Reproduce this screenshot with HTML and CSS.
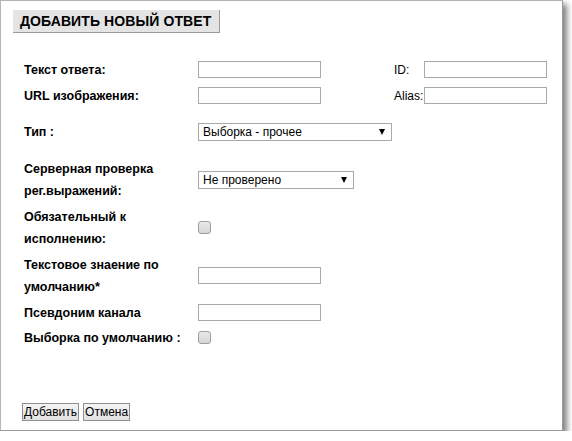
FILE: index.html
```html
<!DOCTYPE html>
<html lang="ru">
<head>
<meta charset="utf-8">
<title>Добавить новый ответ</title>
<link rel="stylesheet" href="styles.css">
</head>
<body>
<div class="panel">
  <div class="title">ДОБАВИТЬ НОВЫЙ ОТВЕТ</div>
  <form class="form">
    <div class="row r1">
      <label class="lbl">Текст ответа:</label>
      <div class="field"><input class="txt" type="text"></div>
      <span class="lbl2">ID:</span>
      <div class="field"><input class="txt" type="text"></div>
    </div>
    <div class="row">
      <label class="lbl">URL изображения:</label>
      <div class="field"><input class="txt" type="text"></div>
      <span class="lbl2">Alias:</span>
      <div class="field"><input class="txt" type="text"></div>
    </div>
    <div class="row r3">
      <label class="lbl">Тип :</label>
      <div class="field"><div class="sel wide">Выборка - прочее</div></div>
    </div>
    <div class="row r4">
      <label class="lbl">Серверная проверка<br>рег.выражений:</label>
      <div class="field"><div class="sel mid">Не проверено</div></div>
    </div>
    <div class="row">
      <label class="lbl">Обязательный к<br>исполнению:</label>
      <div class="field"><span class="chk"></span></div>
    </div>
    <div class="row">
      <label class="lbl">Текстовое знаение по<br>умолчанию*</label>
      <div class="field"><input class="txt" type="text"></div>
    </div>
    <div class="row">
      <label class="lbl">Псевдоним канала</label>
      <div class="field"><input class="txt up" type="text"></div>
    </div>
    <div class="row r8">
      <label class="lbl">Выборка по умолчанию :</label>
      <div class="field"><span class="chk"></span></div>
    </div>
  </form>
  <div class="actions">
    <button class="btn" type="button">Добавить</button>
    <button class="btn" type="button">Отмена</button>
  </div>
</div>
</body>
</html>
```

FILE: styles.css
```css
html, body {
  margin: 0;
  padding: 0;
  background: #fff;
}
body {
  font-family: "Liberation Sans", Arial, sans-serif;
  font-size: 12px;
  color: #000;
}
.panel {
  box-sizing: border-box;
  width: 563px;
  height: 431px;
  border: 1px solid #b4b4b4;
  border-right-color: #9a9a9a;
  border-bottom-color: #9a9a9a;
  background: #fff;
  box-shadow: 4px 4px 6px rgba(0, 0, 0, 0.5);
  display: flex;
  flex-direction: column;
  padding: 9px 0 9px 12px;
}
.title {
  align-self: flex-start;
  box-sizing: border-box;
  width: 207px;
  height: 23px;
  background: #e4e4e4;
  border-right: 1px solid #9c9c9c;
  border-bottom: 1px solid #9c9c9c;
  font-weight: bold;
  font-size: 14px;
  line-height: 22px;
  padding-left: 7px;
  letter-spacing: 0.1px;
}
.form {
  margin: 26px 0 0 11px;
  display: flex;
  flex-direction: column;
  gap: 4px;
}
.row {
  display: grid;
  grid-template-columns: 174px 196px 30px 124px;
  align-items: center;
}
.r3 { margin-top: 10px; }
.r4 { margin-top: 11px; }
.r8 { margin-top: -1px; }
.lbl {
  font-weight: bold;
  font-size: 12.5px;
  line-height: 22px;
  white-space: nowrap;
}
.lbl2 {
  line-height: 22px;
}
.field {
  display: flex;
  align-items: center;
}
.txt {
  box-sizing: border-box;
  width: 123px;
  height: 17px;
  margin: 0;
  padding: 0 2px;
  border: 1px solid #a9a9a9;
  background: #fff;
  font: inherit;
  position: relative;
  top: -1px;
}
.sel {
  box-sizing: border-box;
  position: relative;
  height: 18px;
  border: 1px solid #a9a9a9;
  background: #fff;
  padding-left: 4px;
  line-height: 16px;
  font-size: 12px;
  color: #000;
}
.sel::after {
  content: "";
  position: absolute;
  right: 6px;
  top: 5px;
  width: 0;
  height: 0;
  border-left: 3.5px solid transparent;
  border-right: 3.5px solid transparent;
  border-top: 6px solid #000;
}
.sel.wide { width: 194px; }
.sel.mid { width: 156px; }
.chk {
  box-sizing: border-box;
  display: block;
  width: 13px;
  height: 13px;
  border: 1px solid #9e9e9e;
  border-radius: 3px;
  background: linear-gradient(#e9e9e9, #d6d6d6);
  position: relative;
  top: -1px;
}
.actions {
  margin-top: auto;
  margin-left: 9px;
  display: flex;
  gap: 4px;
}
.btn {
  box-sizing: border-box;
  height: 18px;
  margin: 0;
  padding: 0 1px;
  border: 1px solid #8f8f8f;
  background: linear-gradient(#f4f4f4, #e2e2e2);
  font-family: "Liberation Sans", Arial, sans-serif;
  font-size: 12px;
  line-height: 16px;
  color: #000;
}
```
